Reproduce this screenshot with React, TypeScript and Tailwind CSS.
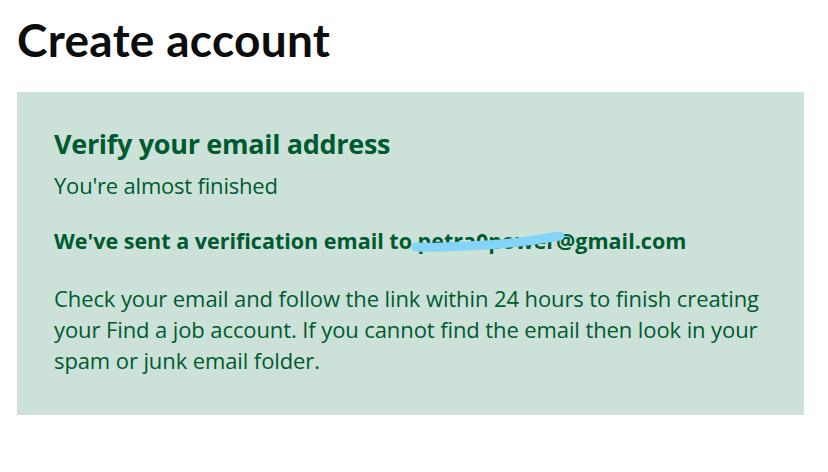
export default function App() {
  return (
    <div className="w-[828px] h-[472px] bg-white text-[#0b0c0c]" style={{ fontFamily: "'Open Sans', Lato, Arial, sans-serif" }}>
      <div className="px-[17px] pt-[12px]">
        <h1 className="text-[46px] leading-[56px] font-bold tracking-[0.3px]" style={{ fontFamily: "Lato, Arial, sans-serif" }}>Create account</h1>
        <div className="mt-[24px] w-[787px] h-[323px] bg-[#cce2d8] text-[#005a30] px-[37px] pt-[34px]">
          <h2 className="text-[27px] leading-[36px] font-bold tracking-[-0.3px]">Verify your email address</h2>
          <p className="mt-[8px] text-[22px] leading-[30px] tracking-[-0.2px]">You're almost finished</p>
          <p className="mt-[26px] text-[21.5px] leading-[30px] font-bold">
            We've sent a verification email to{" "}
            <span className="relative">
              petra0power@gmail.com
              {/* redaction scribble */}
              <svg className="absolute left-[-8px] top-[0px]" width="165" height="30" viewBox="0 0 165 30">
                <path d="M6 21 C 30 22, 50 20, 75 19 S 120 15, 150 10" stroke="#84d3f8" strokeWidth="9" fill="none" strokeLinecap="round" />
              </svg>
            </span>
          </p>
          <p className="mt-[27px] text-[22px] leading-[31px] tracking-[-0.1px]">
            Check your email and follow the link within 24 hours to finish creating your Find a job account. If you cannot find the email then look in your spam or junk email folder.
          </p>
        </div>
      </div>
    </div>
  );
}
